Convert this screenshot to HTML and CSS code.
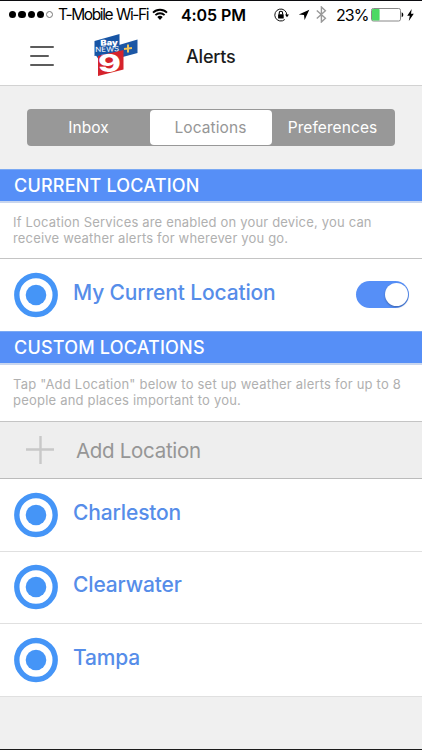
FILE: index.html
```html
<!DOCTYPE html>
<html lang="en">
<head>
    <meta charset="UTF-8">
    <meta name="viewport" content="width=device-width, initial-scale=1.0">
    <title>Alerts</title>
    <link rel="stylesheet" href="styles.css">
</head>
<body>
    <header class="header">
        <div class="status-bar">
            <div class="signal">
                <span class="dot"></span>
                <span class="dot"></span>
                <span class="dot"></span>
                <span class="dot"></span>
                <span class="dot empty"></span>
            </div>
            <span class="carrier">T-Mobile Wi-Fi</span>
            <svg class="wifi" width="16" height="13" viewBox="0 0 16 13">
                <path d="M1 4.6 A10 10 0 0 1 15 4.6 M3.4 7.1 A6.6 6.6 0 0 1 12.6 7.1" fill="none" stroke="#000" stroke-width="1.8"/>
                <path d="M5.3 9.1 A3.9 3.9 0 0 1 10.7 9.1 L8 12 Z"/>
            </svg>
            <span class="time">4:05 PM</span>
            <svg class="lock" width="15" height="14" viewBox="0 0 15 14">
                <path d="M12.8 7 A6 6 0 1 0 10.8 11.5" fill="none" stroke="#111" stroke-width="1"/>
                <path d="M11 6.4 H15 L13 9.2 Z"/>
                <rect x="4.1" y="6.2" width="5.6" height="4.2" rx="0.5"/>
                <path d="M5.2 6.5 V5 A1.7 1.7 0 0 1 8.6 5 V6.5" fill="none" stroke="#000" stroke-width="1.1"/>
            </svg>
            <svg class="arrow" width="12" height="12" viewBox="0 0 12 12">
                <path d="M11.3 0.7 L6.6 11 L6 6.1 L0.8 5.4 Z"/>
            </svg>
            <svg class="bluetooth" width="11" height="17" viewBox="0 0 11 17">
                <path d="M0.8 4.6 L9.4 12.3 L5.4 16 V1 L9.4 4.7 L0.8 12.4" fill="none" stroke="#999" stroke-width="1.4"/>
            </svg>
            <span class="percent">23%</span>
            <svg class="battery" width="33" height="14" viewBox="0 0 33 14">
                <rect x="0.5" y="0.5" width="29" height="12.5" rx="1.8" fill="#fff" stroke="#888"/>
                <rect x="1" y="1" width="7.6" height="11.5" rx="1" fill="#4cd964"/>
                <path d="M30.7 4.3 C32.8 5 32.8 8.6 30.7 9.3 Z"/>
            </svg>
            <svg class="bolt" width="7" height="12" viewBox="0 0 7 12">
                <path d="M4.7 0 L0.2 6.8 H2.8 L1.8 12 L6.8 4.7 H4 Z"/>
            </svg>
        </div>
        <nav class="navbar">
            <button class="menu" aria-label="Menu">
                <span></span>
                <span class="short"></span>
                <span></span>
            </button>
            <svg class="logo" width="46" height="44" viewBox="0 0 46 44">
                <path d="M26 12 L44.5 6.5 V20 L26 25 Z" fill="#1c57a5"/>
                <path d="M1.5 8 L26.5 1 V19 L1.5 23 Z" fill="#1755a5"/>
                <path d="M2 21 L8 19 V30 Z" fill="#1755a5"/>
                <path d="M5 23 L30.5 17 V36.5 L5 43 Z" fill="#d5232c"/>
                <g transform="rotate(-2 14 12)">
                    <text class="logo-bay" x="7.5" y="12.6" textLength="17.5" lengthAdjust="spacingAndGlyphs">Bay</text>
                    <text class="logo-news" x="2" y="18.6" textLength="24" lengthAdjust="spacingAndGlyphs">NEWS</text>
                </g>
                <text class="logo-nine" x="5" y="39" textLength="23" lengthAdjust="spacingAndGlyphs">9</text>
                <path d="M35 11.5 V19.5 M31 15.9 L39 15.1" stroke="#f3c65a" stroke-width="2"/>
            </svg>
            <h1>Alerts</h1>
        </nav>
    </header>

    <div class="tabs">
        <button class="tab">Inbox</button>
        <button class="tab active">Locations</button>
        <button class="tab">Preferences</button>
    </div>

    <h2>CURRENT LOCATION</h2>
    <p class="info">If Location Services are enabled on your device, you can<br>receive weather alerts for wherever you go.</p>
    <div class="row">
        <svg class="target" width="44" height="46" viewBox="0 0 44 46">
            <ellipse cx="22" cy="23" rx="19.2" ry="19.5"/>
            <circle class="center" cx="22" cy="23" r="10.3"/>
        </svg>
        <span class="name">My Current Location</span>
        <span class="switch"></span>
    </div>

    <h2>CUSTOM LOCATIONS</h2>
    <p class="info custom">Tap "Add Location" below to set up weather alerts for up to 8<br>people and places important to you.</p>
    <button class="add">
        <svg width="28" height="28" viewBox="0 0 28 28">
            <path d="M14.5 0 V28 M0 13.5 H28" stroke="#c8c8c8" stroke-width="2.4"/>
        </svg>
        <span>Add Location</span>
    </button>
    <div class="list">
        <div class="row">
            <svg class="target" width="44" height="46" viewBox="0 0 44 46">
                <ellipse cx="22" cy="23" rx="19.2" ry="19.5"/>
                <circle class="center" cx="22" cy="23" r="10.3"/>
            </svg>
            <span class="name">Charleston</span>
        </div>
        <div class="row">
            <svg class="target" width="44" height="46" viewBox="0 0 44 46">
                <ellipse cx="22" cy="23" rx="19.2" ry="19.5"/>
                <circle class="center" cx="22" cy="23" r="10.3"/>
            </svg>
            <span class="name">Clearwater</span>
        </div>
        <div class="row">
            <svg class="target" width="44" height="46" viewBox="0 0 44 46">
                <ellipse cx="22" cy="23" rx="19.2" ry="19.5"/>
                <circle class="center" cx="22" cy="23" r="10.3"/>
            </svg>
            <span class="name">Tampa</span>
        </div>
    </div>
</body>
</html>
```
FILE: styles.css
```css
* {
    box-sizing: border-box;
}
body {
    margin: 0;
    height: 750px;
    overflow: hidden;
    background: #f0f0f0;
    font-family: Inter, "Liberation Sans", sans-serif;
    border-top: 1px solid #0c0c10;
    border-bottom: 1px solid #1b1b1b;
}
button {
    border: 0;
    padding: 0;
    font-family: inherit;
}
.header {
    height: 85px;
    background: #fff;
    border-bottom: 1px solid #d2d2d2;
}
.status-bar {
    display: flex;
    align-items: center;
    height: 27px;
    padding-left: 9px;
    font-size: 16px;
    white-space: nowrap;
}
.status-bar span,
.status-bar svg {
    flex-shrink: 0;
}
.signal {
    display: flex;
    gap: 2px;
    width: 49px;
}
.dot {
    width: 7.3px;
    height: 7.3px;
    border-radius: 50%;
    background: #000;
}
.empty {
    background: #fff;
    border: 1px solid #777;
}
.carrier {
    width: 94px;
    font-size: 15.5px;
    letter-spacing: -1.4px;
    word-spacing: 1px;
}
.time {
    width: 65px;
    margin-left: 13px;
    font-weight: 600;
    letter-spacing: -0.1px;
}
.lock {
    margin-left: 28px;
}
.arrow {
    margin-left: 9px;
}
.bluetooth {
    margin-left: 6px;
}
.percent {
    width: 35px;
    margin-left: 9px;
    letter-spacing: -0.9px;
}
.bolt {
    margin-left: 3px;
}
.navbar {
    display: flex;
    height: 57px;
    padding-left: 30px;
}
.menu {
    display: flex;
    flex-direction: column;
    gap: 7px;
    width: 24px;
    padding-top: 18px;
    background: none;
}
.menu span {
    width: 24px;
    height: 2px;
    border-radius: 1px;
    background: #5c5c5c;
}
.menu .short {
    width: 19px;
}
.logo {
    margin: 5px 0 0 39px;
    fill: #fff;
}
.logo-bay {
    font-size: 8px;
    font-weight: 900;
}
.logo-news {
    font-size: 7px;
    font-weight: 400;
}
.logo-nine {
    font-size: 24px;
    font-weight: 800;
}
h1 {
    margin: 18px 0 0 47px;
    font-size: 18px;
    line-height: 22px;
    font-weight: 500;
    letter-spacing: -0.2px;
    color: #1c1c1c;
}
.tabs {
    display: flex;
    width: 368px;
    height: 37px;
    margin: 23px 0 23px 27px;
    padding: 1px;
    border-radius: 4px;
    background: #989898;
}
.tab {
    flex: 1;
    padding-right: 1px;
    background: none;
    color: #fff;
    font-size: 15.5px;
    letter-spacing: 0.08px;
}
.active {
    border-radius: 4px;
    background: #fff;
    color: #969696;
}
h2 {
    height: 34px;
    margin: 0;
    padding-left: 14px;
    border-top: 1px solid #7ba9f3;
    border-bottom: 2px solid #c9d6ee;
    background: #568ff7;
    color: #fff;
    font-size: 18px;
    line-height: 31px;
    font-weight: 500;
    letter-spacing: 0.2px;
}
.info {
    height: 56px;
    margin: 0;
    padding: 12px 0 0 13px;
    background: #fff;
    border-bottom: 1px solid #c4c4c4;
    color: #b0b0b0;
    font-size: 13px;
    line-height: 15.5px;
    letter-spacing: 0.18px;
    white-space: nowrap;
}
.custom {
    height: 57px;
    letter-spacing: 0.21px;
}
.row {
    display: flex;
    align-items: center;
    height: 72px;
    padding: 0 0 1px 14px;
    background: #fff;
}
.target {
    fill: none;
    stroke: #4595f7;
    stroke-width: 5.4;
}
.target .center {
    fill: #4595f7;
    stroke: none;
}
.name {
    margin: -5px 0 0 15px;
    color: #568de9;
    font-size: 21px;
    font-weight: 500;
    letter-spacing: -0.15px;
}
.switch {
    display: flex;
    justify-content: flex-end;
    align-items: center;
    width: 53px;
    height: 27px;
    margin: 0 13px 0 auto;
    padding-right: 1px;
    border-radius: 14px;
    background: #568ff7;
}
.switch::after {
    content: "";
    width: 23px;
    height: 23px;
    border-radius: 50%;
    background: #fff;
    box-shadow: 0 1px 2px rgba(0, 0, 0, 0.3);
}
.add {
    display: flex;
    align-items: center;
    gap: 22px;
    width: 100%;
    height: 57px;
    padding-left: 26px;
    background: #eee;
    border-bottom: 1px solid #bbb;
    color: #969696;
    font-size: 20.5px;
    letter-spacing: -0.3px;
}
.list .row {
    height: 73px;
    border-bottom: 1px solid #e0e0e0;
}
.list .row:nth-child(2) {
    height: 72px;
}
```
